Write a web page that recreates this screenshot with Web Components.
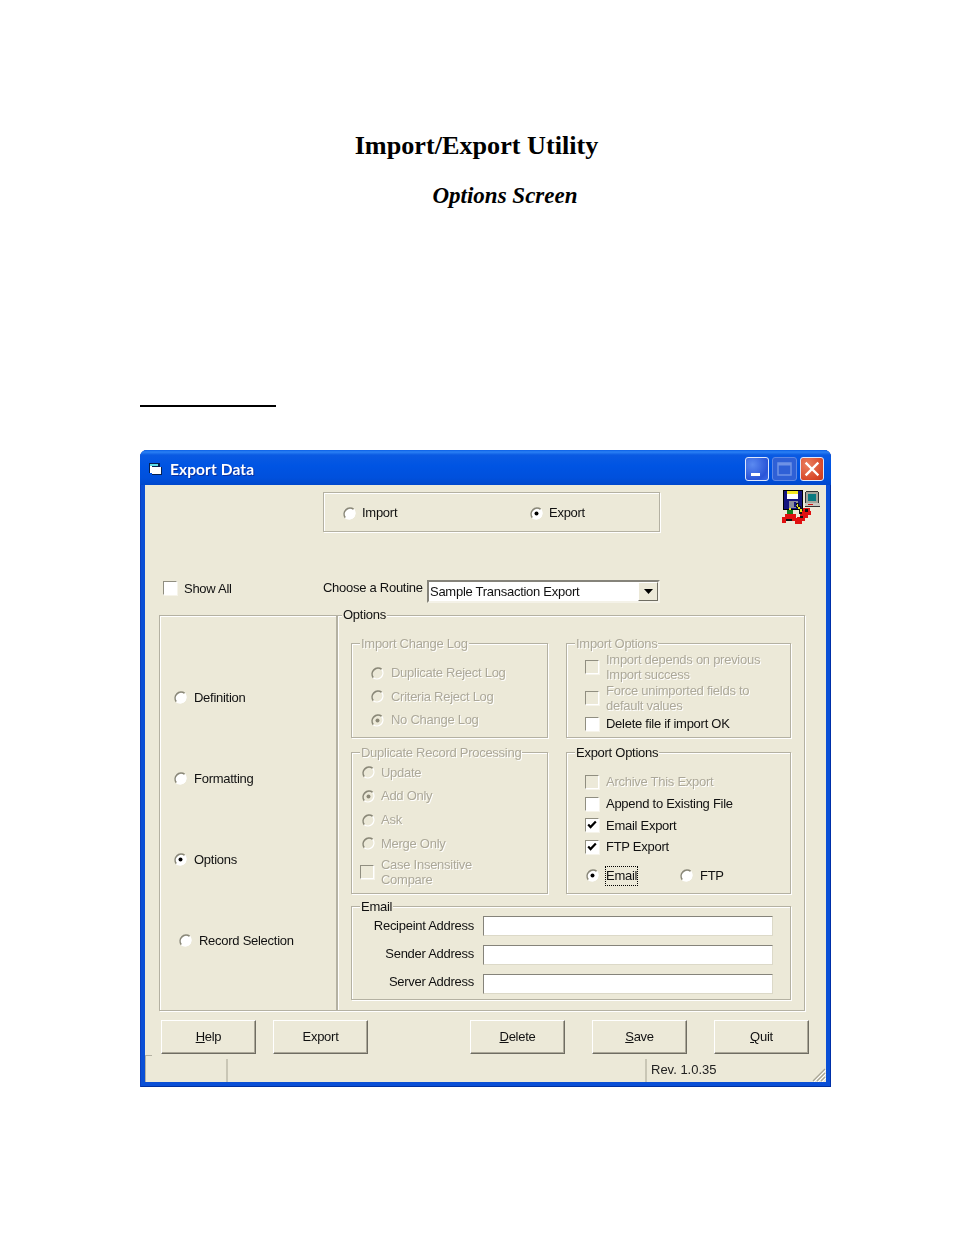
<!DOCTYPE html>
<html><head><meta charset="utf-8"><title>Import/Export Utility</title>
<style>
html,body{margin:0;padding:0;background:#fff}
body{width:954px;height:1235px;overflow:hidden}
</style></head><body>
<doc-head>
  <span slot="title">Import/Export Utility</span>
  <span slot="sub">Options Screen</span>
</doc-head>
<xp-window>
  <span slot="caption">Export Data</span>
  <dlg-row class="top">
    <xp-group id="mode">
      <xp-radio style="width:187px;gap:6px">Import</xp-radio>
      <xp-radio checked style="gap:6px">Export</xp-radio>
    </xp-group>
    <app-icon></app-icon>
  </dlg-row>
  <dlg-row class="routine">
    <xp-check style="width:160px;margin:0 0 7px -1px">Show All</xp-check>
    <span style="width:104px;margin-bottom:9px;white-space:nowrap">Choose a Routine</span>
    <xp-combo>Sample Transaction Export</xp-combo>
  </dlg-row>
  <dlg-row class="main">
    <xp-group id="nav">
      <xp-radio>Definition</xp-radio>
      <xp-radio>Formatting</xp-radio>
      <xp-radio checked>Options</xp-radio>
      <xp-radio style="margin-left:5px">Record Selection</xp-radio>
    </xp-group>
    <xp-group id="options" style="--lx:4px;--ty:-9px">
      <span slot="legend">Options</span>
      <dlg-grid>
        <xp-group id="log" disabled>
          <span slot="legend">Import Change Log</span>
          <xp-radio disabled>Duplicate Reject Log</xp-radio>
          <xp-radio disabled>Criteria Reject Log</xp-radio>
          <xp-radio disabled checked>No Change Log</xp-radio>
        </xp-group>
        <xp-group id="imp" disabled>
          <span slot="legend">Import Options</span>
          <xp-check disabled>Import depends on previous<br>Import success</xp-check>
          <xp-check disabled>Force unimported fields to<br>default values</xp-check>
          <xp-check style="margin-top:3px">Delete file if import OK</xp-check>
        </xp-group>
        <xp-group id="dup" disabled>
          <span slot="legend">Duplicate Record Processing</span>
          <xp-radio disabled style="gap:6px">Update</xp-radio>
          <xp-radio disabled checked style="gap:6px">Add Only</xp-radio>
          <xp-radio disabled style="gap:6px">Ask</xp-radio>
          <xp-radio disabled style="gap:6px">Merge Only</xp-radio>
          <xp-check disabled style="margin:1px 0 0 -2px">Case Insensitive<br>Compare</xp-check>
        </xp-group>
        <xp-group id="exp">
          <span slot="legend">Export Options</span>
          <xp-check disabled class="r">Archive This Export</xp-check>
          <xp-check class="r">Append to Existing File</xp-check>
          <xp-check class="r" checked>Email Export</xp-check>
          <xp-check class="r" checked>FTP Export</xp-check>
          <dlg-row class="pick">
            <xp-radio checked style="width:94px;margin-left:1px"><span style="display:inline-block;outline:1px dotted #000;padding:1px 0">Email</span></xp-radio>
            <xp-radio>FTP</xp-radio>
          </dlg-row>
        </xp-group>
        <xp-group id="mail" style="grid-column:1/3">
          <span slot="legend">Email</span>
          <mail-fields>
            <span style="margin-bottom:2px">Recipeint Address</span><xp-text></xp-text>
            <span style="margin-bottom:4px">Sender Address</span><xp-text></xp-text>
            <span style="margin-bottom:6px">Server Address</span><xp-text></xp-text>
          </mail-fields>
        </xp-group>
      </dlg-grid>
    </xp-group>
  </dlg-row>
  <dlg-row class="btns">
    <xp-button style="margin-left:0"><u>H</u>elp</xp-button>
    <xp-button style="margin-left:17px">Export</xp-button>
    <xp-button style="margin-left:102px"><u>D</u>elete</xp-button>
    <xp-button style="margin-left:27px"><u>S</u>ave</xp-button>
    <xp-button style="margin-left:27px"><u>Q</u>uit</xp-button>
  </dlg-row>
  <xp-status>Rev. 1.0.35</xp-status>
</xp-window>

<script>
function def(name, css, html){
  class C extends HTMLElement{
    constructor(){super();const r=this.attachShadow({mode:'open'});r.innerHTML='<style>'+css+'</style>'+html;}
  }
  customElements.define(name,C);
}
const GLINE='#b4b1a2';
def('doc-head',`
  :host{display:block;height:450px;box-sizing:border-box;padding-top:127px;color:#000;font-family:"Liberation Serif",serif}
  .t{display:block;text-align:center;padding-right:1px;font-size:26.2px;line-height:37px;font-weight:bold}
  .s{display:block;margin:18px 0 0 0;padding-left:56px;text-align:center;font-size:23px;line-height:27px;font-weight:bold;font-style:italic}
  .r{width:136px;height:2px;background:#000;margin:196px 0 0 140px}
`,`<div class="t"><slot name="title"></slot></div><div class="s"><slot name="sub"></slot></div><div class="r"></div>`);

def('xp-window',`
  :host{display:block;width:691px;height:637px;margin-left:140px;box-sizing:border-box;border-radius:7px 7px 0 0;background:#0a4fd6;
    font-family:"Liberation Sans",Arial,sans-serif;font-size:13px;letter-spacing:-.27px;color:#111;filter:blur(.35px);overflow:hidden;position:relative;
    box-shadow:inset 1px 0 0 #0a3fc0,inset -1px 0 0 #0030a8,inset 0 -1px 0 #0030a0}
  .bar{height:35px;display:flex;align-items:center;padding:0 7px 0 9px;
    background:linear-gradient(#0a5fe6 0,#2a80f4 2px,#0a5ae2 5px,#0054e3 45%,#0050dc 80%,#0048cc 100%);color:#fff}
  .ico{margin-top:3px;flex:none}
  .cap{margin-left:7px;flex:1;font:bold 15.5px Lato,"Liberation Sans",sans-serif;letter-spacing:.1px;text-shadow:1px 1px 0 #0a2f9c;margin-top:3px}
  .b{width:24px;height:24px;margin-left:3px;box-sizing:border-box;border:1px solid #dfe8fb;border-radius:3px;display:block;margin-top:2px}
  .min{background:radial-gradient(circle at 30% 30%,#5b8af0,#2a55d8 70%,#3a6ae6)}
  .max{width:25px;background:#2f60d6;border-color:#5f88e4}
  .cls{background:radial-gradient(circle at 30% 30%,#ea8060,#d8482a 70%,#c83a1e)}
  .client{position:absolute;left:5px;right:5px;top:35px;bottom:5px;background:#ece9d8;display:flex;flex-direction:column}
`,`<div class="bar">
  <svg class="ico" width="14" height="13" viewBox="0 0 14 13" shape-rendering="crispEdges"><rect x="0" y="0" width="11" height="10" fill="#06204f"/><rect x="1" y="1" width="8" height="2" fill="#5fe0e8"/><rect x="1" y="3" width="2" height="7" fill="#fff"/><rect x="3" y="4" width="9" height="7" fill="#fff"/><rect x="12" y="4" width="1" height="8" fill="#06204f"/><rect x="3" y="11" width="10" height="1" fill="#06204f"/></svg>
  <span class="cap"><slot name="caption"></slot></span>
  <svg class="b min" viewBox="0 0 22 22"><rect x="5" y="15" width="9" height="3" fill="#fff"/></svg>
  <svg class="b max" viewBox="0 0 23 22"><rect x="5" y="5" width="13" height="12" fill="none" stroke="#6f92e6" stroke-width="1.5"/><rect x="5" y="5" width="13" height="2.5" fill="#6f92e6"/></svg>
  <svg class="b cls" viewBox="0 0 22 22"><path d="M5.5 5.5L16.5 16.5M16.5 5.5L5.5 16.5" stroke="#fff" stroke-width="2.4" stroke-linecap="square"/></svg>
</div><div class="client"><slot></slot></div>`);

def('dlg-row',`
  :host{display:flex;align-items:center}
  :host(.top){height:95px;align-items:flex-start;padding:7px 0 0 178px;box-sizing:border-box}
  :host(.routine){height:23px;padding-left:19px}
  :host(.main){height:396px;margin:12px 0 0 14px;align-items:stretch}
  :host(.btns){height:34px;margin:9px 0 0 16px;align-items:flex-start}
  :host(.pick){margin-top:9px}
`,`<slot></slot>`);

def('xp-group',`
  :host{--lx:8px;--ty:-8px;display:block;position:relative;box-sizing:border-box;border:1px solid ${GLINE};box-shadow:1px 1px 0 #fff,inset 1px 1px 0 #fff}
  .lg{position:absolute;left:var(--lx);top:var(--ty);padding:0 1px;background:#ece9d8;line-height:16px;white-space:nowrap}
  :host([disabled]) .lg{color:#aca899;text-shadow:1px 1px 0 #fff}
  :host(#mode){width:337px;height:40px;display:flex;align-items:center;padding:2px 0 0 19px}
  :host(#nav){width:178px;padding:41px 0 0 14px}
  :host(#options){width:468px;padding:27px 0 0 13px}
  :host(#log){padding:17.5px 0 0 19px;height:95px}
  :host(#imp){padding:8px 0 0 18px;height:95px}
  :host(#dup){padding:8px 0 0 10px;height:142px}
  :host(#exp){padding:18px 0 0 18px;height:142px}
  :host(#mail){padding:9px 0 0 0;height:94px;margin-top:-2px}
  :host(#nav) ::slotted(xp-radio){height:81px}
  :host(#log) ::slotted(xp-radio){height:23.5px}
  :host(#dup) ::slotted(xp-radio){height:23.67px}
  :host(#exp) ::slotted(.r){height:21.7px}
  :host(#imp) ::slotted(xp-check){margin-bottom:1px}
`,`<span class="lg"><slot name="legend"></slot></span><slot></slot>`);

def('dlg-grid',`:host{display:grid;grid-template-columns:197px 225px;column-gap:18px;row-gap:14px;grid-template-rows:95px 142px auto}`,`<slot></slot>`);
def('mail-fields',`:host{display:grid;grid-template-columns:122px 290px;column-gap:9px;row-gap:9px;grid-auto-rows:20px;align-items:center}
  ::slotted(span){text-align:right;white-space:nowrap}`,`<slot></slot>`);

def('xp-radio',`
  :host{display:flex;align-items:center;gap:7px;line-height:16px;white-space:nowrap}
  :host([disabled]){color:#aca899;text-shadow:1px 1px 0 #fff}
  svg{flex:none;display:block}
  .f{fill:#fff} :host([disabled]) .f{fill:#ece9d8}
  .d{display:none;fill:#000} :host([checked]) .d{display:block} :host([disabled]) .d{fill:#8a8776}
`,`<svg width="13" height="13" viewBox="0 0 13 13"><circle class="f" cx="6.5" cy="6.5" r="6"/>
<path d="M10.7 2.3A6 6 0 0 0 2.3 10.7" fill="none" stroke="#8a8878" stroke-width="1.6"/>
<path d="M2.3 10.7A6 6 0 0 0 10.7 2.3" fill="none" stroke="#fff" stroke-width="1.4"/>
<circle class="d" cx="6.5" cy="6.5" r="2"/></svg><span><slot></slot></span>`);

def('xp-check',`
  :host{display:flex;align-items:center;gap:7px;line-height:15px;white-space:nowrap}
  :host([disabled]){color:#aca899;text-shadow:1px 1px 0 #fff}
  .c{flex:none;width:14px;height:14px;box-sizing:border-box;background:#fff;border:1.5px solid;border-color:#908e80 #fff #fff #908e80;box-shadow:1px 1px 0 #f6f4ea;display:block}
  :host([disabled]) .c{background:#ece9d8}
  path{display:none} :host([checked]) path{display:block}
`,`<svg class="c" viewBox="0 0 11 11"><path d="M2 5l2.2 2.4L9 2.2" fill="none" stroke="#000" stroke-width="2"/></svg><span><slot></slot></span>`);

def('xp-combo',`
  :host{display:flex;width:233px;height:23px;box-sizing:border-box;background:#fff;border:2px solid;border-color:#85837a #f4f2e8 #f4f2e8 #85837a;align-items:center;padding-left:1px;position:relative}
  .t{flex:1}
  .a{width:20px;height:19px;background:#ece9d8;box-sizing:border-box;border:1.5px solid;border-color:#fff #6f6d62 #6f6d62 #fff;display:flex;align-items:center;justify-content:center}
`,`<span class="t"><slot></slot></span><span class="a"><svg width="9" height="5" viewBox="0 0 9 5"><path d="M0 0H9L4.5 5Z" fill="#000"/></svg></span>`);

def('xp-text',`:host{display:block;height:20px;box-sizing:border-box;background:#fff;border:1.5px solid;border-color:#85837a #dcd9c8 #dcd9c8 #85837a}`,``);

def('xp-button',`
  :host{display:flex;align-items:center;justify-content:center;width:95px;height:34px;box-sizing:border-box;background:#ece9d8;
    border:1px solid;border-color:#fff #6f6d62 #6f6d62 #fff;box-shadow:inset -1px -1px 0 #aca899;padding-bottom:1px}
`,`<span><slot></slot></span>`);

def('xp-status',`
  :host{display:flex;height:27px;margin-top:1px;position:relative;letter-spacing:0}
  .a{width:81px;border-left:1.5px solid #b4b1a2;border-top:1.5px solid #b4b1a2;box-sizing:border-box;height:100%;position:relative}
  .a:after{content:"";position:absolute;left:6px;right:0;top:-2px;height:3px;background:#ece9d8}
  .b{width:417px;border-left:2px solid #c9c6b5;margin-top:4px}
  .c{flex:1;border-left:2px solid #c9c6b5;margin-top:4px;padding:1px 0 0 4px;line-height:20px;color:#222}
  svg{position:absolute;right:0;bottom:0}
`,`<div class="a"></div><div class="b"></div><div class="c"><slot></slot></div>
<svg width="14" height="14" viewBox="0 0 14 14"><path d="M13 1L1 13M13 5L5 13M13 9L9 13" stroke="#a8a595" stroke-width="1.2"/><path d="M14 2L2 14M14 6L6 14M14 10L10 14" stroke="#fff" stroke-width="1"/></svg>`);

def('app-icon',`:host{display:block;margin:-2px 0 0 122px;width:38px;height:34px}`,
`<svg width="38" height="34" viewBox="0 0 38 34" shape-rendering="crispEdges">
<rect x="1" y="0" width="20" height="20" fill="#000"/><rect x="2" y="1" width="18" height="18" fill="#14147e"/>
<rect x="5" y="1" width="11" height="8" fill="#fff"/><rect x="5" y="1" width="11" height="3" fill="#f4e820"/>
<rect x="7" y="11" width="9" height="7" fill="#8c8c9c"/><rect x="12" y="12" width="2" height="5" fill="#14147e"/>
<rect x="24" y="2" width="12" height="11" fill="#a4a49a"/><rect x="24" y="1" width="12" height="1" fill="#333"/><rect x="26" y="4" width="8" height="7" fill="#0a7a80"/><rect x="23" y="2" width="1" height="11" fill="#333"/><rect x="36" y="2" width="1" height="11" fill="#333"/>
<rect x="23" y="13" width="15" height="3" fill="#c8c8c0"/><rect x="23" y="16" width="15" height="1" fill="#333"/><rect x="26" y="14" width="5" height="1" fill="#d01010"/>
<path d="M14 13h3v3h2v2h2v4h-1v2h-3v-4h-1v-2h-2v-2h1z" fill="#111"/><path d="M15 14h1v3h2v2h2v3h-2v-3h-2v-2h-1z" fill="#f0e820"/>
<rect x="5" y="20" width="6" height="5" fill="#108020"/><rect x="7" y="18" width="2" height="2" fill="#f0e820"/>
<path d="M3 24h11v4h2v3h-6v-2H4v4H0v-6h3z" fill="#e01010"/><rect x="4" y="29" width="6" height="2" fill="#111"/>
<path d="M21 18h7v3h1v4h-3v3h-3v3h-3v3h-7v-4h2v-3h3v-3h2v-3h1z" fill="#e01010"/><rect x="23" y="19" width="3" height="3" fill="#111"/><rect x="18" y="26" width="3" height="2" fill="#111"/>
</svg>`);
</script>
</body></html>
